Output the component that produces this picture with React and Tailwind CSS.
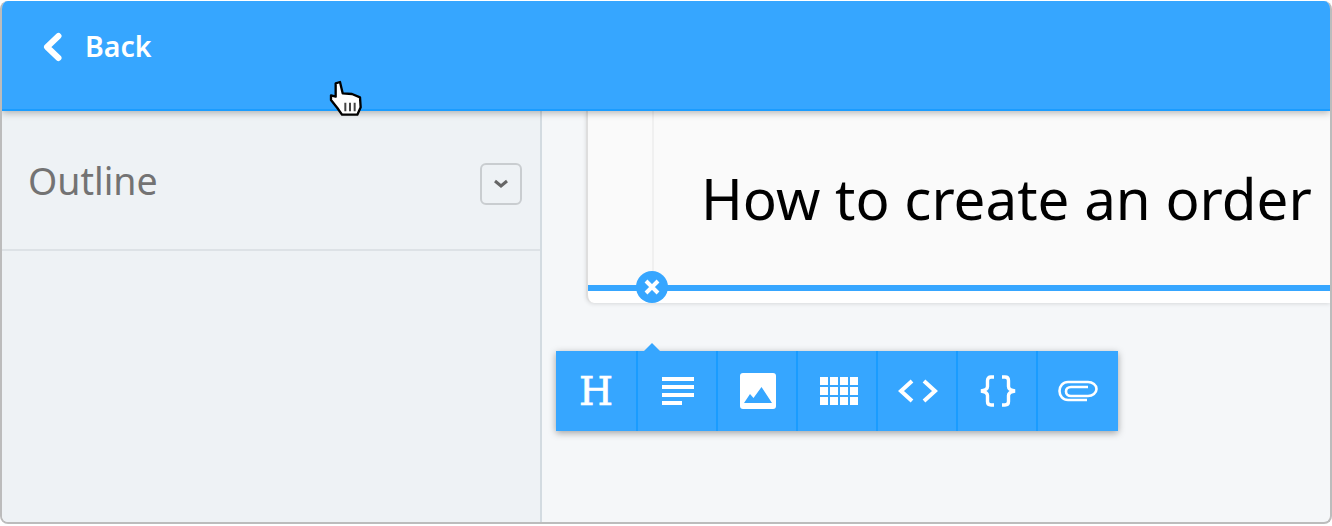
import React from 'react';

const HandCursor = () => (
  <svg className="absolute left-[318px] top-[69px] z-20" width="50" height="50" viewBox="0 0 150 150">
    <path
      d="M47 40L60 36L68 70L96 72L120 82L122 112L112 134L66 134L52 114L33 90L33 76L47 80Z"
      fill="#fff"
      stroke="#000"
      strokeWidth="7"
      strokeLinejoin="round"
    />
    <path d="M76 98v26M90 98v26M104 98v26" stroke="#444" strokeWidth="6" />
  </svg>
);

const tools = [
  {
    name: 'heading',
    icon: (
      <span className="font-['DejaVu_Serif',serif] text-[39px] leading-none text-white [-webkit-text-stroke:0.7px_white]">H</span>
    ),
  },
  {
    name: 'text',
    icon: (
      <svg width="32" height="28" viewBox="0 0 32 28" fill="#fff">
        <path d="M0 0h32v4H0zM0 8h32v4H0zM0 16h32v4H0zM0 24h20v4H0z" />
      </svg>
    ),
  },
  {
    name: 'image',
    icon: (
      <svg width="36" height="36" viewBox="0 0 36 36">
        <rect width="36" height="36" rx="3" fill="#fff" />
        <path d="M4 30l6-9 3.500 4 8-11 10.500 16z" fill="#36a6ff" />
      </svg>
    ),
  },
  {
    name: 'table',
    icon: (
      <svg className="ml-[2px]" width="38" height="28" viewBox="0 0 38 28" fill="#fff">
        <path d="M0 0h8v8H0zM10 0h8v8h-8zM20 0h8v8h-8zM30 0h8v8h-8zM0 10h8v8H0zM10 10h8v8h-8zM20 10h8v8h-8zM30 10h8v8h-8zM0 20h8v8H0zM10 20h8v8h-8zM20 20h8v8h-8zM30 20h8v8h-8z" />
      </svg>
    ),
  },
  {
    name: 'code',
    icon: (
      <svg width="40" height="24" viewBox="0 0 40 24" fill="none" stroke="#fff" strokeWidth="4">
        <path d="M14 2L3 12l11 10M26 2l11 10-11 10" />
      </svg>
    ),
  },
  {
    name: 'braces',
    icon: (
      <svg width="36" height="32" viewBox="0 0 36 32" fill="none" stroke="#fff" strokeWidth="3.400">
        <path d="M14 2h-3Q7.500 2 7.500 5.500v6Q7.500 15 1 16q6.500 1 6.500 4.500v6Q7.500 30 11 30h3M22 2h3q3.500 0 3.500 3.500v6q0 3.500 6.500 4.500-6.500 1-6.500 4.500v6q0 3.500-3.500 3.500h-3" />
      </svg>
    ),
  },
  {
    name: 'attachment',
    icon: (
      <svg width="40" height="22" viewBox="0 0 40 22" fill="none" stroke="#fff" strokeWidth="2.600">
        <path d="M29 20H10C5 20 1.500 16 1.500 11S5 2 10 2h20c4.500 0 8.500 3 8.500 7s-4 7-8.500 7H13c-3 0-5-2-5-4.500S10 7 13 7h17" />
      </svg>
    ),
  },
];

const App = () => {
  return (
    <div className="h-[526px] w-[1332px] overflow-hidden bg-white pt-px font-['Noto_Sans',sans-serif]">
      <div className="relative flex h-[523px] w-[1332px] flex-col overflow-hidden rounded-lg border-x-2 border-b-2 border-[#bcbcbc] bg-[#f5f7f9]">
        <header className="relative z-10 flex h-[110px] shrink-0 items-start border-b-2 border-[#1a9cff] bg-[#36a6ff] pl-[40px] pt-[31px] shadow-[0_2px_7px_rgba(0,0,0,0.28)]">
          <svg width="22" height="30" viewBox="0 0 22 30" fill="none" stroke="#fff" strokeWidth="6" strokeLinecap="round" strokeLinejoin="round">
            <path d="M16.500 4L5 15l11.500 11" />
          </svg>
          <span className="ml-[21px] -mt-px text-[28.5px] leading-[30px] font-semibold text-white">Back</span>
        </header>
        <HandCursor />
        <div className="flex min-h-0 flex-1">
          <aside className="w-[540px] shrink-0 border-r-2 border-[#d3dbe1] bg-[#eef2f5]">
            <div className="flex h-[140px] items-start justify-between border-b-2 border-[#dde2e6] pl-[26px] pr-[18px]">
              <span className="mt-[45px] text-[37.5px] leading-[50px] text-[#737373]">Outline</span>
              <button className="mt-[52px] flex h-[42px] w-[42px] items-center justify-center rounded-[6px] border-2 border-[#c9cdd0]">
                <svg width="16" height="10" viewBox="0 0 16 10" fill="none" stroke="#666" strokeWidth="3">
                  <path d="M2 2l6 5 6-5" />
                </svg>
              </button>
            </div>
          </aside>
          <main className="min-w-0 flex-1">
            <div className="relative ml-[44px] h-[192px] rounded-bl-lg border-l-2 border-[#dedede] bg-white shadow-[0_1px_4px_rgba(0,0,0,0.12)]">
              <div className="flex h-[174px] bg-[#fafafa]">
                <div className="w-[66px] shrink-0 border-r-2 border-[#f0f0f0]" />
                <h1 className="ml-[47px] mt-[52px] whitespace-nowrap text-[56.5px] leading-[72px] font-normal text-black">How to create an order</h1>
              </div>
              <div className="h-[6px] bg-[#36a6ff]" />
              <div className="absolute left-[48px] top-[160px] flex h-[32px] w-[32px] items-center justify-center rounded-full bg-[#36a6ff]">
                <svg width="16" height="16" viewBox="0 0 16 16" stroke="#fff" strokeWidth="4">
                  <path d="M2 2l12 12M14 2L2 14" />
                </svg>
              </div>
            </div>
            <div className="relative ml-[14px] mt-[48px] flex h-[80px] w-[562px] bg-[#36a6ff] shadow-[0_2px_7px_rgba(0,0,0,0.35)]">
              <div className="absolute left-[88px] top-[-8px] h-0 w-0 border-x-[8px] border-b-[8px] border-x-transparent border-b-[#36a6ff]" />
              {tools.map((tool, i) => (
                <div
                  key={tool.name}
                  className={`flex h-full items-center justify-center ${i === 0 ? 'w-[82px] border-r-2 border-[#1a9cff]' : i < tools.length - 1 ? 'w-[80px] border-r-2 border-[#1a9cff] pl-[2px]' : 'w-[80px]'}`}
                >
                  {tool.icon}
                </div>
              ))}
            </div>
          </main>
        </div>
      </div>
    </div>
  );
};

export default App;
